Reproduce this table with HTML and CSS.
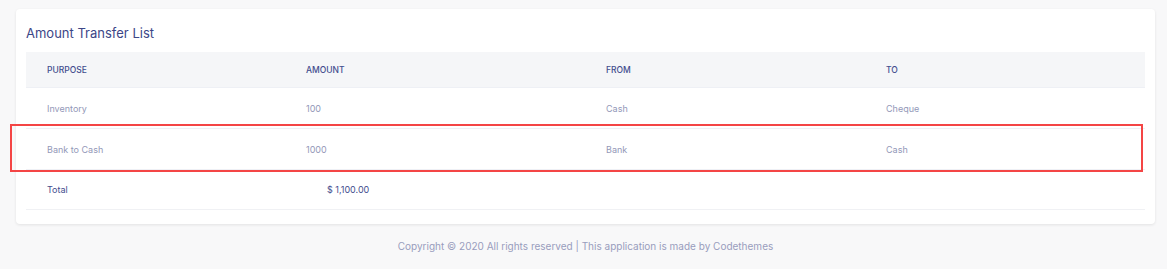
FILE: index.html
```html
<!DOCTYPE html>
<html lang="en">
<head>
    <meta charset="UTF-8">
    <meta name="viewport" content="width=device-width, initial-scale=1.0">
    <title>Amount Transfer List</title>
    <link rel="stylesheet" href="styles.css">
</head>
<body>
    <div class="card">
        <div class="card-title">Amount Transfer List</div>

        <table class="transfer-table">
            <thead>
                <tr>
                    <th class="col-purpose">Purpose</th>
                    <th class="col-amount">Amount</th>
                    <th class="col-from">From</th>
                    <th class="col-to">To</th>
                </tr>
            </thead>
            <tbody>
                <tr>
                    <td>Inventory</td>
                    <td>100</td>
                    <td>Cash</td>
                    <td>Cheque</td>
                </tr>
                <tr>
                    <td>Bank to Cash</td>
                    <td>1000</td>
                    <td>Bank</td>
                    <td>Cash</td>
                </tr>
                <tr class="total-row">
                    <td>Total</td>
                    <td class="total-amount">$ 1,100.00</td>
                    <td></td>
                    <td></td>
                </tr>
            </tbody>
        </table>

        <!-- selected row marker -->
        <div class="row-marker"></div>
    </div>

    <div class="footer">Copyright © 2020 All rights reserved | This application is made by Codethemes</div>
</body>
</html>
```

FILE: styles.css
```css
body {
    font-family: Inter, "Open Sans", sans-serif;
    margin: 0;
    padding: 9px 12px 0 16px;
    background-color: #f8f8f9;
}
.card {
    position: relative;
    background: #fff;
    border-radius: 4px;
    box-shadow: 0 1px 3px rgba(0,0,0,0.09);
    padding: 14px 10px 14px;
}
.card-title {
    font-size: 13px;
    line-height: 20px;
    color: #3c4687;
    margin-bottom: 9px;
}
.transfer-table {
    width: 100%;
    border-collapse: collapse;
}
.transfer-table th {
    background-color: #f5f6f8;
    color: #434d8e;
    font-size: 8.5px;
    font-weight: 500;
    text-transform: uppercase;
    text-align: left;
    height: 35px;
    padding: 0 0 0 21px;
    border-bottom: 1px solid #eef0f5;
}
.transfer-table td {
    color: #9398b8;
    font-size: 9px;
    height: 40px;
    padding: 0 0 0 21px;
    border-bottom: 1px solid #eef0f5;
}
.col-purpose { width: 238px; }
.col-amount { width: 279px; }
.col-from { width: 259px; }
.total-row td {
    color: #434d8e;
    height: 39px;
    border-bottom-color: #f0f1f4;
}
.total-row .total-amount {
    padding-left: 42px;
}
.row-marker {
    position: absolute;
    left: -6px;
    top: 115px;
    width: 1129px;
    height: 44px;
    border: 2px solid #f44545;
}
.footer {
    text-align: center;
    font-size: 10px;
    color: #989dbd;
    padding: 16px 0;
}
```
